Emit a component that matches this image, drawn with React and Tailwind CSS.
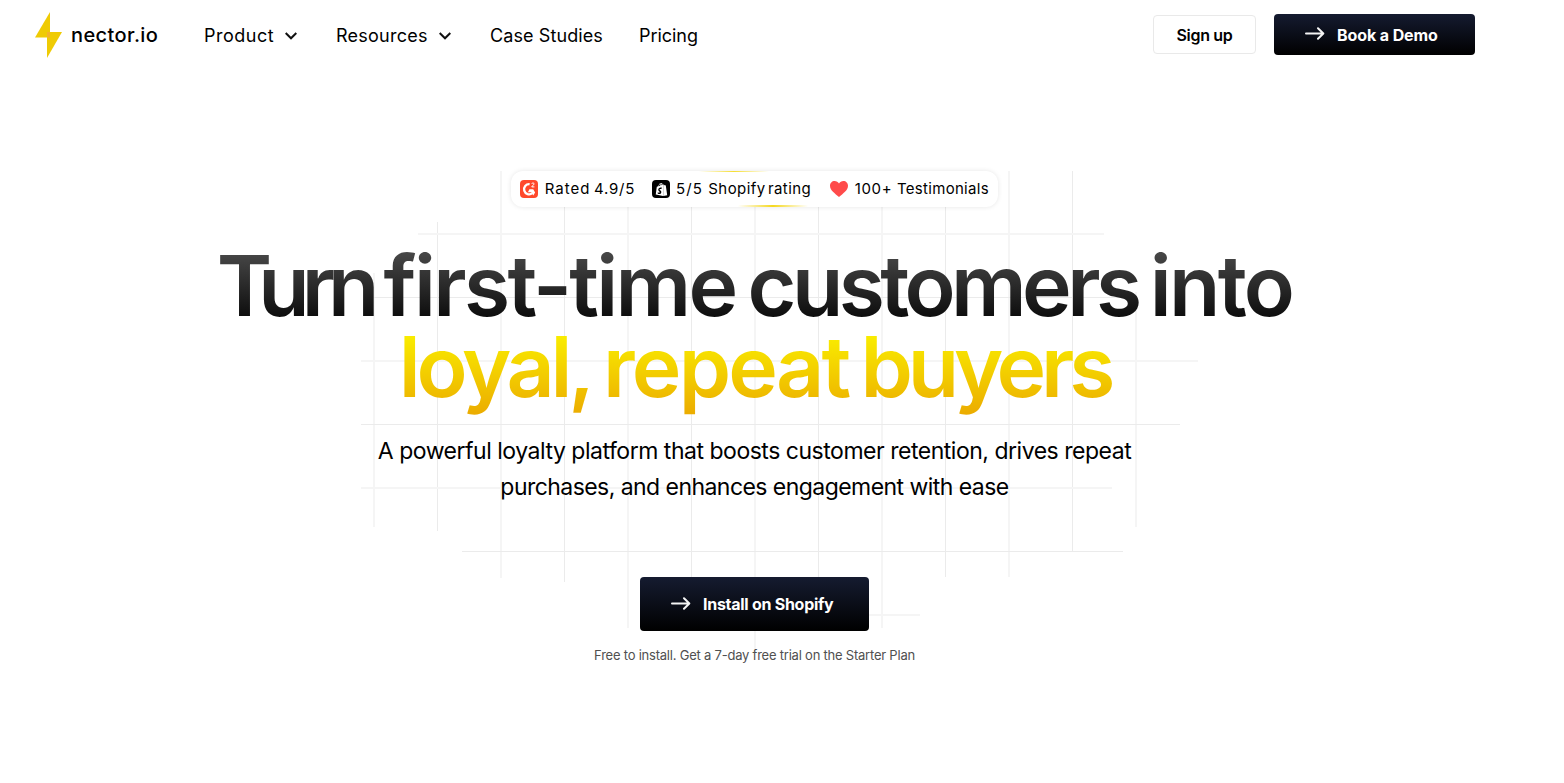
import React from "react";
import { SiShopify } from "react-icons/si";

const Bolt = () => (
  <svg className="w-[27px] h-[46px]" viewBox="0 0 27 46" fill="none">
    <path d="M15 0L0 25.5H15V0Z" fill="#EFCB04" />
    <path d="M12 20H27L12 46V20Z" fill="#EFCB04" />
    <path d="M12 20H15V25.5H12V20Z" fill="#F4B32A" />
  </svg>
);

const Chevron = () => (
  <svg className="w-3 h-2" viewBox="0 0 12 8" fill="none" stroke="#111" strokeWidth="2">
    <path d="M0.7 1L6 6.3L11.3 1" />
  </svg>
);

const Arrow = () => (
  <svg className="w-5 h-[14px]" viewBox="0 0 20 14" fill="none" stroke="#f4f4f4" strokeWidth="2" strokeLinecap="round" strokeLinejoin="round">
    <path d="M1 6.5H18M13 1.2L18.3 6.5L13 11.8" />
  </svg>
);

const G2Icon = () => (
  <svg className="w-[18px] h-[18px]" viewBox="0 0 18 18" fill="none">
    <rect width="18" height="18" rx="4" fill="#FF492C" />
    <path d="M9.6 4.1A5.1 5.1 0 1 0 12.3 13.2" stroke="#fff" strokeWidth="2.3" />
    <path d="M9.4 9.2H13.2L15.1 12.4L13.3 15.4L11.4 12.2H7.9L9.4 9.2Z" fill="#fff" />
    <path d="M11.7 3.9C12 2.6 14.2 2.7 14.1 4C14 5.1 12 5.4 11.8 6.9H14.4" stroke="#fff" strokeWidth="1" />
  </svg>
);

const HeartIcon = () => (
  <svg className="w-[18px] h-4" viewBox="0 0 18 16">
    <path d="M9 16C5 12.6 0 9.3 0 4.8C0 2.1 2 0 4.6 0C6.5 0 8.1 1 9 2.6C9.9 1 11.5 0 13.4 0C16 0 18 2.1 18 4.8C18 9.3 13 12.6 9 16Z" fill="#FF4B4B" />
  </svg>
);

// [x, y1, y2, soft]
const verticals = [
  [374, 273, 527, true],
  [437.5, 222, 531, false],
  [501, 171, 578, true],
  [564.5, 171, 582, false],
  [628, 171, 628, true],
  [691.5, 171, 600, false],
  [755, 171, 652, true],
  [818.5, 171, 600, false],
  [882, 171, 628, true],
  [945.5, 171, 577, false],
  [1009, 171, 577, true],
  [1072.5, 171, 551, false],
  [1136, 292, 527, true],
];

// [y, x1, x2, soft]
const horizontals = [
  [234, 418, 1104, true],
  [297.5, 372, 1130, false],
  [361, 361, 1198, true],
  [424.5, 361, 1180, false],
  [488, 361, 1112, true],
  [551.5, 462, 1123, false],
  [615, 800, 920, true],
];

const Grid = () => (
  <svg className="absolute left-0 top-0 w-[1509px] h-[700px] -z-10" viewBox="0 0 1509 700">
    {verticals.map(([x, y1, y2, soft]) => (
      <line key={x} x1={x} x2={x} y1={y1} y2={y2} stroke={soft ? "#f5f5f5" : "#ebebeb"} strokeWidth={soft ? 2 : 1} />
    ))}
    {horizontals.map(([y, x1, x2, soft]) => (
      <line key={y} x1={x1} x2={x2} y1={y} y2={y} stroke={soft ? "#f5f5f5" : "#ebebeb"} strokeWidth={soft ? 2 : 1} />
    ))}
  </svg>
);

const Header = () => (
  <header className="flex h-[70px] items-center pl-[35px] pr-[34px] text-lg text-black">
    <a className="flex w-[169px] items-center gap-[9px]">
      <Bolt />
      <span className="text-xl font-medium tracking-[0.4px]">nector.io</span>
    </a>
    <nav className="flex items-center pt-px">
      <a className="flex w-[132px] items-center gap-[11px]">
        <span className="tracking-[0.5px]">Product</span>
        <Chevron />
      </a>
      <a className="flex w-[154px] items-center gap-[11px]">
        <span className="tracking-[0.25px]">Resources</span>
        <Chevron />
      </a>
      <a className="w-[149px] tracking-[0.1px]">Case Studies</a>
      <a className="tracking-[-0.05px]">Pricing</a>
    </nav>
    <div className="ml-auto flex items-center gap-[18px] pb-0.5">
      <button className="h-[39px] w-[103px] rounded border border-[#e9e9e9] pt-0.5 text-base font-semibold tracking-[-0.3px]">
        Sign up
      </button>
      <button className="flex h-[41px] w-[201px] items-center gap-3 rounded bg-linear-to-b/srgb from-[#151b30] to-black pl-[31px] text-base font-bold tracking-[-0.1px] text-white">
        <Arrow />
        <span className="pt-0.5">Book a Demo</span>
      </button>
    </div>
  </header>
);

const Ratings = () => (
  <div className="relative flex h-9 w-[487px] items-center rounded-xl bg-white pl-[9px] text-[15px] text-black shadow-[0_0_5px_rgba(0,0,0,0.1)]">
    <span className="absolute left-[188px] top-0 h-px w-[70px] bg-linear-to-r/srgb from-[#f5de3300] via-[#f5de33] to-[#f5de3300]" />
    <span className="absolute bottom-0 left-[227px] h-0.5 w-[70px] bg-linear-to-r/srgb from-[#f5d81f00] via-[#f5d81f] to-[#f5d81f00]" />
    <div className="flex w-[132px] items-center">
      <G2Icon />
      <span className="ml-[3px] w-[53px] tracking-[1px]">Rated</span>
      <span className="tracking-[0.8px]">4.9/5</span>
    </div>
    <div className="flex w-[178px] items-center">
      <span className="flex h-[18px] w-[18px] items-center justify-center rounded bg-black">
        <SiShopify size={13} color="#fff" />
      </span>
      <span className="ml-1 w-8 tracking-[1.1px] -indent-px">5/5</span>
      <span className="w-[62px] tracking-[0.45px]">Shopify</span>
      <span className="tracking-[0.4px]">rating</span>
    </div>
    <div className="flex items-center">
      <HeartIcon />
      <span className="ml-0.5 w-[47px] tracking-[0.6px]">100+</span>
      <span className="tracking-[0.3px]">Testimonials</span>
    </div>
  </div>
);

const Hero = () => (
  <main className="flex flex-col items-center pt-[101px] text-center">
    <Ratings />
    <h1 className="mt-[38px] text-[84px] leading-[81px] font-semibold whitespace-nowrap [word-spacing:-9px]">
      <span className="block bg-linear-to-b/srgb from-[#4e4e4e] to-[#050505] bg-clip-text text-transparent">
        <span className="tracking-[-7.9px]">Turn</span>{" "}
        <span className="tracking-[-2.7px]">first-time</span>{" "}
        <span className="tracking-[-4.6px]">customers</span>{" "}
        <span className="tracking-[-2.7px]">into</span>
      </span>
      <span className="-mb-4 block bg-linear-to-b/srgb from-[#fbf400] to-[#eaa500] bg-clip-text pb-4 text-transparent">
        <span className="tracking-[-4.2px]">loyal,</span>{" "}
        <span className="tracking-[-2.8px]">repeat</span>{" "}
        <span className="tracking-[-5.2px]">buyers</span>
      </span>
    </h1>
    <p className="mt-[26px] text-[23px] leading-9 text-black">
      <span className="block tracking-[-0.48px]">
        A powerful loyalty platform that boosts customer retention, drives repeat
      </span>
      <span className="block tracking-[-0.55px]">purchases, and enhances engagement with ease</span>
    </p>
    <button className="mt-[72px] flex h-[54px] w-[229px] items-center gap-3 rounded bg-linear-to-b/srgb from-[#151b30] to-black pl-[31px] text-base font-bold tracking-[-0.27px] text-white">
      <Arrow />
      Install on Shopify
    </button>
    <p className="mt-[14px] text-[13px] leading-5 tracking-[-0.22px] text-[#505050]">
      Free to install. Get a 7-day free trial on the Starter Plan
    </p>
  </main>
);

const App = () => {
  return (
    <div className="min-h-screen bg-white font-['Inter',sans-serif]">
      <div className="relative isolate w-[1509px]">
        <Grid />
        <Header />
        <Hero />
      </div>
    </div>
  );
};

export default App;
